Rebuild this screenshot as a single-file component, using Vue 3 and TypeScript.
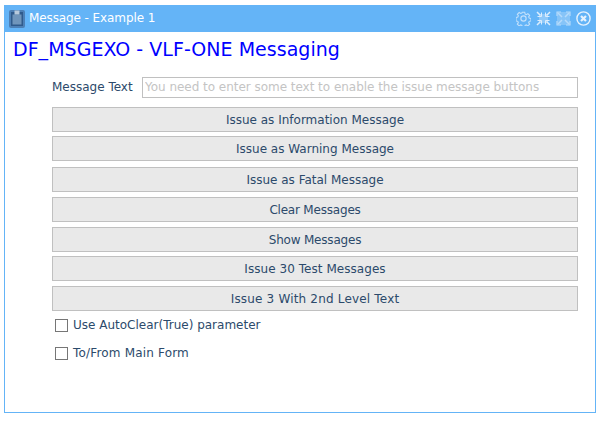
<script setup lang="ts">
interface Action {
  label: string
  spacing: number
}

const buttons: Action[] = [
  { label: 'Issue as Information Message', spacing: 0 },
  { label: 'Issue as Warning Message', spacing: 0 },
  { label: 'Issue as Fatal Message', spacing: 0 },
  { label: 'Clear Messages', spacing: -0.2 },
  { label: 'Show Messages', spacing: -0.2 },
  { label: 'Issue 30 Test Messages', spacing: 0.05 },
  { label: 'Issue 3 With 2nd Level Text', spacing: 0.18 },
]
</script>

<template>
  <div class="page">
    <section class="window">
      <header class="titlebar">
        <svg class="app-icon" width="16" height="18" viewBox="0 0 16 18">
          <rect x="0" y="0" width="16" height="18" rx="2" fill="#4d80b6" />
          <rect x="2" y="2" width="12" height="14" fill="#2f5a8c" />
          <rect x="3.5" y="4.5" width="9" height="10" fill="#7095bb" />
          <rect x="5.5" y="0.5" width="5" height="4" fill="#b7c9dc" />
        </svg>
        <span class="title">Message - Example 1</span>
        <div class="tools">
          <svg width="15" height="15" viewBox="0 0 16 16" fill="none" stroke="#c4e1fb" stroke-width="1.2">
            <path d="M6.6 1h2.8l.4 2 1.4.6 1.7-1.1 2 2-1.1 1.7.6 1.4 2 .4v2.8l-2 .4-.6 1.4 1.1 1.7-2 2-1.7-1.1-1.4.6-.4 2H6.6l-.4-2-1.4-.6-1.7 1.1-2-2 1.1-1.7-.6-1.4-2-.4V6.8l2-.4.6-1.4-1.1-1.7 2-2 1.7 1.1 1.4-.6z" transform="translate(.4 .4) scale(.95)" />
            <circle cx="8" cy="8" r="2.8" />
          </svg>
          <svg width="15" height="15" viewBox="0 0 15 15" fill="none" stroke="#dcedfd" stroke-width="1.5">
            <rect x="3" y="3" width="9" height="9" fill="#8ec8f9" stroke="none" />
            <path d="M1 1l3.5 3.5M14 1l-3.5 3.5M1 14l3.5-3.5M14 14l-3.5-3.5" />
            <path d="M1.5 5.5h4v-4M13.5 5.5h-4v-4M1.5 9.5h4v4M13.5 9.5h-4v4" stroke-width="1" />
          </svg>
          <svg width="15" height="15" viewBox="0 0 15 15" fill="none" stroke="#b6dbfb" stroke-width="1.5">
            <rect x="1" y="1" width="13" height="13" fill="#86c4f8" stroke="none" />
            <path d="M2 2l4 4M13 2L9 6M2 13l4-4M13 13L9 9" />
            <path d="M1 5V1h4M14 5V1h-4M1 10v4h4M14 10v4h-4" stroke-width="1.2" />
          </svg>
          <svg width="15" height="15" viewBox="0 0 15 15" fill="none" stroke="#e6f2fd">
            <circle cx="7.5" cy="7.5" r="6.6" stroke-width="1.4" />
            <path d="M5 5l5 5M10 5l-5 5" stroke-width="2.2" />
          </svg>
        </div>
      </header>
      <main class="body">
        <h1 class="heading">DF_MSGEXO - VLF-ONE Messaging</h1>
        <div class="form">
          <div class="field">
            <label class="field-label" for="msg">Message Text</label>
            <input id="msg" class="field-input" type="text" placeholder="You need to enter some text to enable the issue message buttons" />
          </div>
          <div class="buttons">
            <button
              v-for="b in buttons"
              :key="b.label"
              class="btn"
              type="button"
              :style="{ letterSpacing: b.spacing + 'px' }"
            >{{ b.label }}</button>
          </div>
          <label class="check first"><span class="box"></span>Use AutoClear(True) parameter</label>
          <label class="check wide"><span class="box"></span>To/From Main Form</label>
        </div>
      </main>
    </section>
  </div>
</template>

<style>
html, body { margin: 0; background: #fff; }
</style>

<style scoped>
.page {
  width: 602px;
  height: 421px;
  box-sizing: border-box;
  padding: 5px 6px 8px 4px;
  font-family: "DejaVu Sans", sans-serif;
  background: #fff;
}
.window {
  height: 100%;
  box-sizing: border-box;
  display: flex;
  flex-direction: column;
  border: 1px solid #64b4f7;
  border-top: 0;
}
.titlebar {
  height: 27px;
  flex: none;
  margin: 0 -1px;
  padding: 0 5px;
  background: #64b4f7;
  display: flex;
  align-items: center;
  color: #fff;
}
.app-icon { flex: none; margin-top: 1px; }
.title { margin: -1px 0 0 4px; font-size: 12px; letter-spacing: -0.1px; }
.tools { margin-left: auto; display: flex; gap: 5px; }
.tools svg { display: block; }
.body { flex: 1; padding: 6px 17px 0 8px; }
.heading {
  margin: 0;
  font-size: 19px;
  line-height: 22px;
  font-weight: 400;
  letter-spacing: 0.03px;
  color: #0000ff;
}
.form { margin: 16px 0 0 39px; }
.field { display: flex; align-items: center; height: 22px; }
.field-label { width: 90px; flex: none; font-size: 12px; color: #2c4a6b; }
.field-input {
  flex: 1;
  min-width: 0;
  height: 21px;
  box-sizing: border-box;
  border: 1px solid #c0c0c0;
  padding: 0 2px;
  font: 12px "DejaVu Sans", sans-serif;
  letter-spacing: -0.03px;
  outline: none;
}
.field-input::placeholder { color: #c4c4c4; opacity: 1; }
.buttons { margin-top: 9px; display: flex; flex-direction: column; }
.btn {
  height: 25px;
  flex: none;
  box-sizing: border-box;
  margin-top: 5px;
  border: 1px solid #c0c0c0;
  background: #e9e9e9;
  font: 12px "DejaVu Sans", sans-serif;
  color: #2c4a6b;
  padding: 0;
}
.btn:first-child { margin-top: 0; }
.btn:nth-child(2), .btn:nth-child(6) { margin-top: 4px; }
.btn:nth-child(3) { margin-top: 6px; }
.check {
  display: flex;
  align-items: center;
  height: 16px;
  margin: 12px 0 0 3px;
  font-size: 12px;
  color: #2c4a6b;
}
.check.first { margin-top: 6px; }
.check.wide { letter-spacing: 0.18px; }
.box {
  width: 13px;
  height: 13px;
  box-sizing: border-box;
  border: 1px solid #767676;
  margin-right: 5px;
  background: #fff;
}
</style>
